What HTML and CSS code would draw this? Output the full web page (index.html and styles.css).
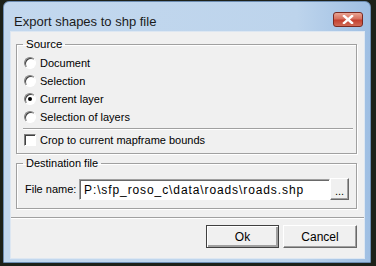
FILE: index.html
```html
<!DOCTYPE html>
<html lang="en">
  <head>
    <meta charset="UTF-8" />
    <title>Export shapes to shp file</title>
    <link rel="stylesheet" href="styles.css">
  </head>
  <body>
    <div class="window">
      <div class="titlebar">
        <span class="title">Export shapes to shp file</span>
        <button class="close-btn" aria-label="Close">
          <svg width="12" height="9" viewBox="0 0 12 9">
            <path d="M2 1 L10 8 M10 1 L2 8" stroke="#fff" stroke-width="2.4" stroke-linecap="square" />
          </svg>
        </button>
      </div>
      <div class="client">
        <fieldset class="group source">
          <legend>Source</legend>
          <label class="option">
            <span class="radio"></span>Document
          </label>
          <label class="option">
            <span class="radio"></span>Selection
          </label>
          <label class="option">
            <span class="radio checked"></span>Current layer
          </label>
          <label class="option">
            <span class="radio"></span>Selection of layers
          </label>
          <div class="etched"></div>
          <label class="option">
            <span class="checkbox"></span>Crop to current mapframe bounds
          </label>
        </fieldset>

        <fieldset class="group destination">
          <legend>Destination file</legend>
          <div class="file-row">
            <span class="file-label">File name:</span>
            <div class="file-input">P:\sfp_roso_c\data\roads\roads.shp</div>
            <button class="browse-btn">...</button>
          </div>
        </fieldset>

        <div class="etched wide"></div>

        <div class="buttons">
          <button class="push-btn default">Ok</button>
          <button class="push-btn">Cancel</button>
        </div>
      </div>
    </div>
  </body>
</html>
```

FILE: styles.css
```css
* {
  box-sizing: border-box;
  margin: 0;
  padding: 0;
}

body {
  width: 376px;
  height: 266px;
  overflow: hidden;
  background: #1d2119;
  font-family: "Liberation Sans", Arial, sans-serif;
  font-size: 11px;
  color: #000;
  padding: 1px 0 0 3px;
}

.window {
  width: 368px;
  height: 262px;
  border-radius: 6px 6px 0 0;
  background: linear-gradient(90deg, #c3d8ee 0%, #bdd4ec 80%, #9fbfe3 100%);
  border: 1px solid #6d8db3;
  padding: 0 5px 3px 6px;
  display: flex;
  flex-direction: column;
}

.titlebar {
  height: 29px;
  display: flex;
  align-items: flex-start;
  padding: 9px 2px 0 4px;
}

.title {
  font-size: 13px;
  color: #1b1b1b;
  padding-top: 3px;
}

.close-btn {
  margin-left: auto;
  width: 30px;
  height: 15px;
  margin-top: 1px;
  border: 1px solid #7a2a22;
  border-radius: 3px;
  background: linear-gradient(#e9a594 0%, #d6705e 45%, #c4402f 55%, #d06a55 100%);
  display: flex;
  align-items: center;
  justify-content: center;
}

.client {
  flex: 1;
  background: #f0f0f0;
  border: 1px solid #dde7f2;
  padding: 5px 7px 0 5px;
  display: flex;
  flex-direction: column;
}

.group {
  border: 1px solid #a0a0a0;
  box-shadow: inset 1px 1px 0 #fff, 1px 1px 0 #fff;
  padding: 3px 5px 4px 7px;
}

.group legend {
  margin-left: -1px;
  padding: 0 3px;
  line-height: 14px;
  font-size: 11.5px;
}

.option {
  height: 18px;
  display: flex;
  align-items: center;
  gap: 4px;
}

.radio {
  width: 12px;
  height: 12px;
  border-radius: 50%;
  background: #fff;
  border: 1px solid;
  border-color: #808080 #fff #fff #808080;
  box-shadow: inset 1px 1px 0 #404040;
  position: relative;
}

.radio.checked::after {
  content: "";
  position: absolute;
  left: 3px;
  top: 3px;
  width: 4px;
  height: 4px;
  border-radius: 50%;
  background: #000;
}

.checkbox {
  width: 12px;
  height: 12px;
  background: #fff;
  border: 1px solid;
  border-color: #808080 #fff #fff #808080;
  box-shadow: inset 1px 1px 0 #404040;
}

.etched {
  height: 2px;
  border-top: 1px solid #a0a0a0;
  border-bottom: 1px solid #fff;
  margin: 2px -2px 1px -1px;
}

.destination {
  margin-top: 2px;
  padding: 8px 7px 8px 8px;
}

.destination legend {
  margin-left: -2px;
  font-size: 11px;
}

.file-row {
  display: flex;
  align-items: center;
  height: 22px;
}

.file-label {
  width: 54px;
  white-space: nowrap;
}

.file-input {
  flex: 1;
  height: 21px;
  background: #fff;
  border: 1px solid;
  border-color: #a0a0a0 #fff #fff #a0a0a0;
  box-shadow: inset 1px 1px 0 #696969;
  padding: 3px 0 0 4px;
  white-space: nowrap;
  overflow: hidden;
  font-size: 12px;
  letter-spacing: 0.9px;
}

.browse-btn {
  width: 19px;
  height: 22px;
  font-family: inherit;
  font-size: 11px;
  background: #f0f0f0;
  border: 1px solid;
  border-color: #fff #696969 #696969 #fff;
  box-shadow: inset -1px -1px 0 #a0a0a0;
  padding-top: 4px;
}

.etched.wide {
  margin: 8px -7px 0 -5px;
}

.buttons {
  display: flex;
  justify-content: flex-end;
  gap: 4px;
  margin-top: 6px;
}

.push-btn {
  width: 74px;
  height: 23px;
  font-family: inherit;
  font-size: 12px;
  background: #f0f0f0;
  border: 1px solid;
  border-color: #fff #696969 #696969 #fff;
  box-shadow: inset -1px -1px 0 #a0a0a0;
}

.push-btn.default {
  width: 73px;
  border: 1px solid #404040;
  box-shadow: inset 1px 1px 0 #fff, inset -2px -2px 0 #a0a0a0;
}
```
